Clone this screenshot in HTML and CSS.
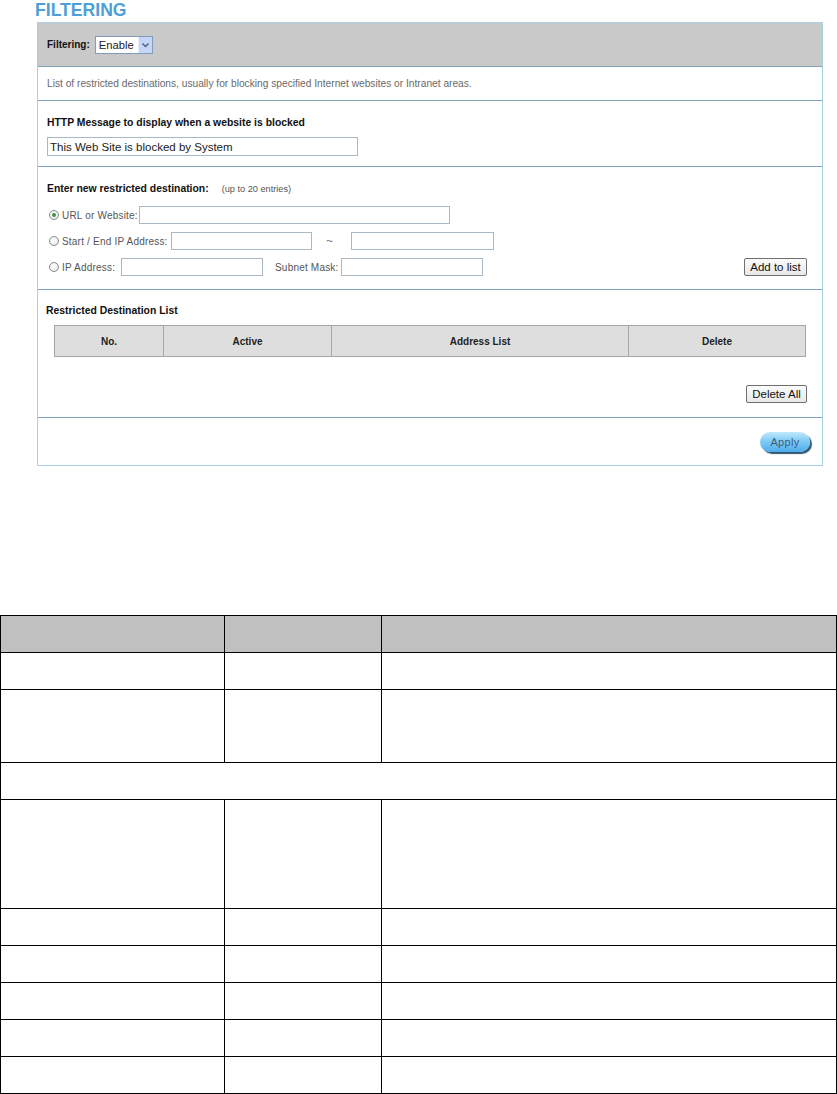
FILE: index.html
```html
<!DOCTYPE html>
<html>
<head>
<meta charset="utf-8">
<title>Filtering</title>
<link rel="stylesheet" href="styles.css">
</head>
<body>
<div class="page">
  <h1 class="title">FILTERING</h1>
  <div class="panel">
    <div class="sec sec-head">
      <span class="lbl-b lbl-filter">Filtering:</span>
      <span class="select"><span class="select-val">Enable</span><span class="select-btn"><svg width="9" height="6" viewBox="0 0 9 6"><path d="M1.5 1.5 L4.5 4.5 L7.5 1.5" fill="none" stroke="#4d6185" stroke-width="1.5"/></svg></span></span>
    </div>
    <div class="sec sec-desc">
      <span class="desc">List of restricted destinations, usually for blocking specified Internet websites or Intranet areas.</span>
    </div>
    <div class="sec sec-http">
      <div class="lbl-b">HTTP Message to display when a website is blocked</div>
      <input class="field field-msg" type="text" value="This Web Site is blocked by System">
    </div>
    <div class="sec sec-enter">
      <div class="enter-head"><span class="lbl-b">Enter new restricted destination:</span><span class="note">(up to 20 entries)</span></div>
      <div class="row">
        <span class="radio checked"></span><span class="rlbl l-url">URL or Website:</span>
        <input class="field w-url" type="text">
      </div>
      <div class="row">
        <span class="radio"></span><span class="rlbl l-range">Start / End IP Address:</span>
        <input class="field w-ip1" type="text">
        <span class="tilde">~</span>
        <input class="field w-ip2" type="text">
      </div>
      <div class="row">
        <span class="radio"></span><span class="rlbl l-ip">IP Address:</span>
        <input class="field w-ip3" type="text">
        <span class="rlbl l-mask">Subnet Mask:</span>
        <input class="field w-mask" type="text">
        <button class="btn btn-add">Add to list</button>
      </div>
    </div>
    <div class="sec sec-list">
      <div class="lbl-b list-title">Restricted Destination List</div>
      <table class="dest">
        <tr>
          <th class="c-no">No.</th>
          <th class="c-act">Active</th>
          <th class="c-addr">Address List</th>
          <th class="c-del">Delete</th>
        </tr>
      </table>
      <div class="del-row"><button class="btn btn-delall">Delete All</button></div>
    </div>
    <div class="sec sec-apply">
      <button class="apply">Apply</button>
    </div>
  </div>

  <table class="doc">
    <tr class="hdr"><td class="d1"></td><td class="d2"></td><td class="d3"></td></tr>
    <tr><td></td><td></td><td></td></tr>
    <tr class="h2"><td></td><td></td><td></td></tr>
    <tr><td colspan="3"></td></tr>
    <tr class="h3"><td></td><td></td><td></td></tr>
    <tr><td></td><td></td><td></td></tr>
    <tr><td></td><td></td><td></td></tr>
    <tr><td></td><td></td><td></td></tr>
    <tr><td></td><td></td><td></td></tr>
    <tr><td></td><td></td><td></td></tr>
  </table>
</div>
</body>
</html>
```

FILE: styles.css
```css
html, body {
  margin: 0;
  padding: 0;
  background: #fff;
}
body {
  font-family: "Liberation Sans", Arial, sans-serif;
  color: #111;
}
.page {
  width: 837px;
}
.title {
  margin: 0 0 2px 35px;
  font-size: 17.6px;
  line-height: 20px;
  font-weight: bold;
  color: #4f9fd7;
}
.panel {
  margin-left: 37px;
  width: 786px;
  box-sizing: border-box;
  border: 1px solid #a8d2e4;
}
.sec {
  box-sizing: border-box;
  border-bottom: 1px solid #7fa2b9;
  padding-left: 9px;
  padding-right: 15px;
}
.sec:last-child {
  border-bottom: none;
}
.sec-head {
  height: 44px;
  background: #c9c9c9;
  display: flex;
  align-items: center;
  gap: 5px;
}
.lbl-b {
  font-weight: bold;
  font-size: 10.4px;
  line-height: 14px;
  color: #111;
}
.lbl-filter {
  font-size: 10px;
}
.select {
  display: inline-flex;
  height: 18px;
  box-sizing: border-box;
  border: 1px solid #7f9db9;
  background: #fff;
  align-items: stretch;
}
.select-val {
  font-size: 11.2px;
  line-height: 16px;
  padding: 0 4px 0 3px;
  color: #222;
}
.select-btn {
  width: 13px;
  background: #c7d6f7;
  border-left: 1px solid #e5ecfb;
  display: flex;
  align-items: center;
  justify-content: center;
}
.sec-desc {
  height: 34px;
  display: flex;
  align-items: center;
}
.desc {
  font-size: 10.2px;
  color: #6a6a6a;
}
.sec-http {
  height: 66px;
  padding-top: 15px;
}
.sec-http .lbl-b {
  margin-bottom: 7px;
}
.field {
  display: block;
  box-sizing: border-box;
  height: 18px;
  margin: 0;
  padding: 0 2px;
  border: 1px solid #a9b9c3;
  background: #fff;
  font-family: "Liberation Sans", Arial, sans-serif;
  font-size: 11.5px;
  color: #222;
  outline: none;
  flex: none;
}
.field-msg {
  width: 311px;
  height: 19px;
}
.sec-enter {
  height: 123px;
  padding-top: 15px;
}
.enter-head {
  display: flex;
  align-items: center;
  height: 14px;
  margin-bottom: 10px;
}
.note {
  font-size: 9.2px;
  color: #555;
  margin-left: 13px;
}
.row {
  display: flex;
  align-items: center;
  height: 18px;
  margin-bottom: 8px;
  padding-left: 2px;
}
.radio {
  width: 10px;
  height: 10px;
  box-sizing: border-box;
  border: 1px solid #8a8a8a;
  border-radius: 50%;
  background: radial-gradient(circle at 40% 40%, #fff 0%, #f0f0f0 60%, #d8d8d8 100%);
  position: relative;
  margin-right: 3px;
  flex: none;
}
.radio.checked::after {
  content: "";
  position: absolute;
  left: 2px;
  top: 2px;
  width: 4px;
  height: 4px;
  border-radius: 50%;
  background: #3f9a3f;
}
.rlbl {
  display: inline-block;
  font-size: 10px;
  letter-spacing: 0.2px;
  color: #555;
  white-space: nowrap;
  flex: none;
}
.l-url { width: 77px; }
.l-range { width: 109px; }
.l-ip { width: 59px; }
.l-mask { width: 66px; margin-left: 12px; }
.w-url { width: 311px; }
.w-ip1 { width: 141px; }
.w-ip2 { width: 143px; }
.w-ip3 { width: 142px; }
.w-mask { width: 142px; }
.tilde {
  font-size: 12px;
  color: #777;
  margin: 0 19px 0 14px;
  width: 6px;
}
.btn {
  font-family: "Liberation Sans", Arial, sans-serif;
  font-size: 11.5px;
  color: #111;
  height: 18px;
  padding: 0 4px;
  border: 1px solid #6f6f6f;
  border-radius: 2px;
  background: linear-gradient(#fbfbfb, #e8e8e8);
  line-height: 15px;
  box-sizing: border-box;
}
.btn-add {
  margin-left: auto;
  width: 63px;
}
.sec-list {
  height: 128px;
  padding-top: 14px;
  padding-left: 8px;
}
.list-title {
  margin-bottom: 7px;
}
.dest {
  margin-left: 8px;
  width: 752px;
  border-collapse: collapse;
}
.dest th {
  height: 30px;
  background: #dedede;
  border: 1px solid #a6a6a6;
  font-size: 10px;
  font-weight: bold;
  color: #222;
  padding: 0;
}
.c-no { width: 108px; }
.c-act { width: 167px; }
.c-addr { width: 296px; }
.del-row {
  display: flex;
  justify-content: flex-end;
  margin-top: 28px;
}
.btn-delall {
  width: 61px;
}
.sec-apply {
  height: 47px;
  display: flex;
  align-items: center;
  justify-content: flex-end;
  padding-right: 12px;
}
.apply {
  width: 50px;
  height: 20px;
  border: none;
  border-radius: 10px;
  background: linear-gradient(#c2e8fc 0%, #86cff6 40%, #4eabea 100%);
  box-shadow: 2px 2px 1px #2f5573;
  font-family: "Liberation Sans", Arial, sans-serif;
  font-size: 11px;
  color: #3a5c7e;
  padding: 0;
  letter-spacing: 0.3px;
}
.doc {
  margin-top: 149px;
  width: 837px;
  border-collapse: collapse;
  table-layout: fixed;
}
.doc td {
  border: 1px solid #000;
  height: 36px;
  padding: 0;
}
.doc .hdr td {
  background: #c0c0c0;
}
.doc .h2 td {
  height: 72px;
}
.doc .h3 td {
  height: 108px;
}
.d1 { width: 223px; }
.d2 { width: 156px; }
```
